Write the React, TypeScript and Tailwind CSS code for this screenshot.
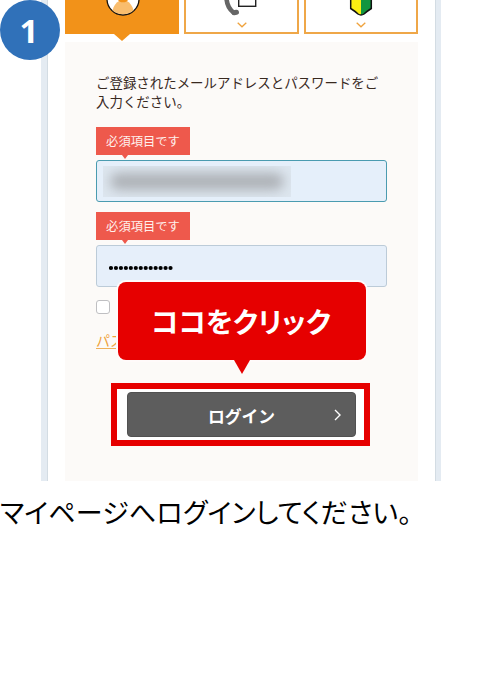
import type { ReactNode } from 'react';
import clsx from 'clsx';

const PASSWORD_LENGTH = 13;

function ChevronDown() {
  return (
    <svg className="absolute bottom-[4px] left-1/2 -ml-[5px] h-[6px] w-[10px]" viewBox="0 0 10 6" fill="none">
      <path d="M.7.8 5 4.8 9.3.8" stroke="#efa23c" strokeWidth="1.3" />
    </svg>
  );
}

function Tab({ active = false, children }: { active?: boolean; children: ReactNode }) {
  return (
    <div
      className={clsx(
        'relative h-[34px]',
        active ? 'bg-[#f29219]' : 'border-2 border-t-0 border-[#efa748] bg-white',
      )}
    >
      {children}
    </div>
  );
}

function Tabs() {
  return (
    <div className="grid h-[42px] grid-cols-[114px_115px_114px] gap-[5px]">
      <Tab active>
        <svg className="absolute left-[41px] top-0 h-[17px] w-[34px]" viewBox="0 0 34 17">
          <circle cx="17" cy="-1" r="16" fill="#fff" stroke="#17130f" strokeWidth="1.3" />
          <path d="M6.5 10.500C7.500 6 10 2.500 13 1h8c3 1.500 5.500 5 6.500 9.500C24.500 13 21 14.200 17 14.200S9.500 13 6.500 10.500Z" fill="#f9bd6d" />
          <path d="M12 0h10c-1 1.400-2.500 2.300-5 2.300S13 1.400 12 0Z" fill="#f29219" />
        </svg>
        <svg className="absolute left-[49px] top-[34px] h-[7px] w-[16px]" viewBox="0 0 16 7">
          <path d="M0 0h16L8 7Z" fill="#f29219" />
        </svg>
      </Tab>
      <Tab>
        <svg className="absolute left-[36px] top-0 h-[17px] w-[38px]" viewBox="0 0 38 17">
          <path d="M4.500-3C4.500 4 7 9 11.500 12.500" stroke="#666" strokeWidth="4.600" strokeLinecap="round" fill="none" />
          <path d="M12 12.800l2.500-.5" stroke="#666" strokeWidth="5" strokeLinecap="round" fill="none" />
          <rect x="16.700" y="-8" width="17" height="14.300" fill="#fff" stroke="#222" strokeWidth="1.400" />
        </svg>
        <ChevronDown />
      </Tab>
      <Tab>
        <svg className="absolute left-[43px] top-0 h-[17px] w-[24px]" viewBox="0 0 24 17">
          <path d="M1.700-3V8.500C4.500 10.300 7 12 9 14q1.500 1 3 1V-3Z" fill="#fbee12" />
          <path d="M22.300-3V8.500C19.500 10.300 17 12 15 14q-1.500 1-3 1V-3Z" fill="#12963f" />
          <path d="M1.700-3V8.500C4.500 10.300 7 12 9 14q3 2 6 0c2-2 4.500-3.700 7.300-5.500V-3" fill="none" stroke="#111" strokeWidth="1.500" />
        </svg>
        <ChevronDown />
      </Tab>
    </div>
  );
}

function RequiredLabel() {
  return (
    <div className="relative flex h-7 w-[94px] items-center justify-center bg-[#ee594c] text-[12.300px] leading-none text-[#fff0ec]">
      必須項目です
      <svg className="absolute left-[26px] top-full h-1 w-[6px]" viewBox="0 0 6 4">
        <path d="M0 0h6L3 4Z" fill="#ee594c" />
      </svg>
    </div>
  );
}

function LoginForm() {
  return (
    <div className="relative h-[439px] bg-[#fcfaf8] pl-[31px] pt-[31px]">
      <p className="whitespace-nowrap text-[13.450px] leading-[19px] text-[#38291f]">
        ご登録されたメールアドレスとパスワードをご
        <br />
        入力ください。
      </p>

      <div className="mt-4">
        <RequiredLabel />
        <div className="mt-[5px] flex h-[42px] w-[291px] items-center rounded-[3px] border border-[#4a9bb0] bg-[#e5effa] pl-[6px]">
          <div className="flex h-[31px] w-[188px] items-center overflow-hidden bg-[#dde6ef] px-[7px]">
            <div className="h-[17px] w-full rounded-full bg-[#adb1b6] blur-[6px]" />
          </div>
        </div>
      </div>

      <div className="mt-[10px]">
        <RequiredLabel />
        <div className="mt-[5px] flex h-[42px] w-[291px] items-center rounded-[3px] border border-[#bccbd8] bg-[#e6effa] pl-3 pt-[3px]">
          <svg className="h-[6px] w-[66px]" viewBox="0 0 66 6">
            {Array.from({ length: PASSWORD_LENGTH }, (_, i) => (
              <circle key={i} cx={2 + i * 4.96} cy="3" r="2.1" />
            ))}
          </svg>
        </div>
      </div>

      <div className="mt-[13px] h-[14px] w-[14px] rounded-[3px] border border-[#bfbfc2] bg-white" />
      <div className="mt-[18px] w-[28px] whitespace-nowrap border-b border-[#efb05a] text-[14px] leading-[16px] text-[#efa23c]">
        パス
      </div>

      {/* Highlighted submit button */}
      <div className="absolute left-[46px] top-[341px] flex h-[63px] w-[259px] items-center justify-center border-6 border-[#e60000] bg-white">
        <div className="relative left-px flex h-[45px] w-[229px] items-center justify-center rounded-[4px] border border-[#515151] bg-[#5d5d5d] pt-[3px] text-[16.800px] font-bold leading-none text-white">
          ログイン
          <svg className="absolute right-[13px] top-[16px] h-3 w-2" viewBox="0 0 8 12" fill="none">
            <path d="M1 1l5 5-5 5" stroke="#fff" strokeWidth="1.400" />
          </svg>
        </div>
      </div>

      <div className="absolute left-[53px] top-[240px] flex h-[78px] w-[248px] items-center justify-center rounded-[8px] bg-[#e60000] pr-[2px] text-[28px] font-bold leading-none text-white ring-2 ring-[#fffafa]">
        <span className="whitespace-nowrap [font-feature-settings:'palt']">ココをクリック</span>
        <svg className="absolute left-[116px] top-full h-[14px] w-[16px]" viewBox="0 0 16 14">
          <path d="M0 0h16L8 14Z" fill="#e60000" />
        </svg>
      </div>
    </div>
  );
}

export default function App() {
  return (
    <div className="relative h-[681px] w-[481px] overflow-hidden bg-white font-['Noto_Sans_CJK_JP',sans-serif]">
      <div className="ml-[41px] h-[481px] w-[400px] border-l-6 border-r-5 border-[#e4ebf2]">
        <div className="h-full border-x border-[#d3dce3] px-[17px]">
          <Tabs />
          <LoginForm />
        </div>
      </div>

      <div className="absolute left-0 top-0 flex size-[60px] items-center justify-center rounded-full bg-[#3071b9] pr-[2px] font-['Open_Sans',sans-serif] text-[33px] font-bold leading-none text-white">
        1
      </div>

      <p className="whitespace-nowrap pt-[11px] text-[27px] leading-[40px] tracking-[0.18px] text-black [font-feature-settings:'palt']">
        マイページへログインしてください。
      </p>
    </div>
  );
}
